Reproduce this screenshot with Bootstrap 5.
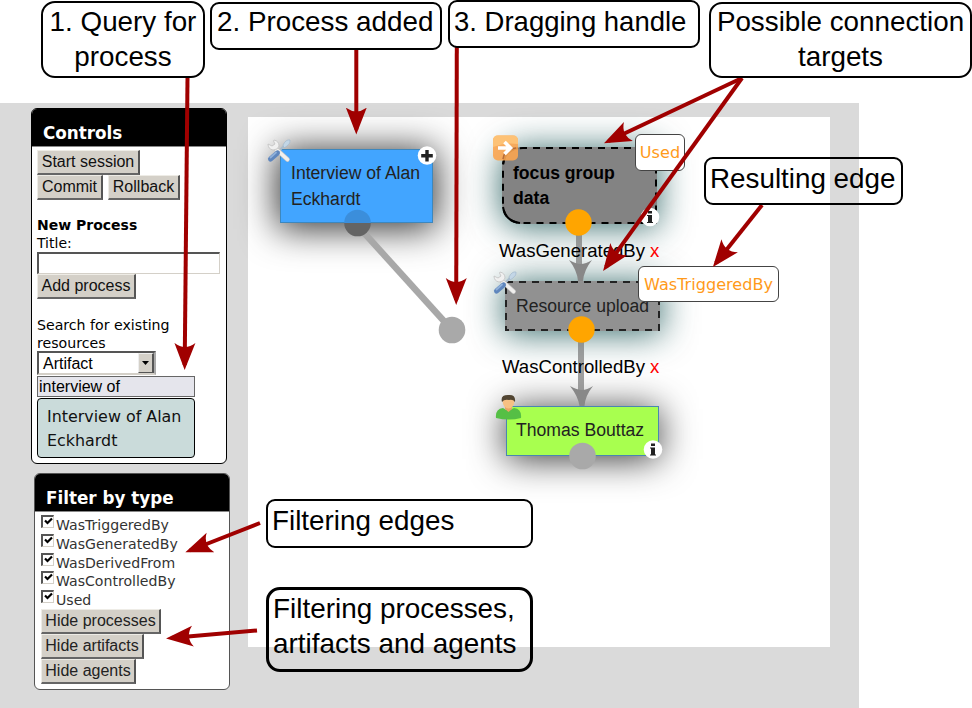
<!DOCTYPE html>
<html lang="en">
<head>
<meta charset="utf-8">
<title>Provenance editor guide</title>
<link href="https://cdn.jsdelivr.net/npm/bootstrap@5.3.0/dist/css/bootstrap.min.css" rel="stylesheet">
<style>
body{background:#fff;color:#000;font-family:"DejaVu Sans",sans-serif;font-size:14px;line-height:18px}
.guide{width:972px;height:708px;padding-top:103px}
.workspace{width:859px;height:605px;background:#dadada}
.side{width:248px;padding:5px 0 0 31px}
.panel{width:196px;border:1px solid #000;border-radius:6px;background:#fff}
.panel-controls{height:356px;margin-bottom:9px}
.panel-filter{height:217px;margin-left:3px;border-color:#555;color:#333}
.panel h2{background:#000;color:#fff;font-size:16.8px;font-weight:bold;line-height:20px;height:38px;padding:14px 0 0 11px;border-bottom:1px solid #888}
.panel-filter h2{height:38px}
.pbody{padding:3px 5px 0}
.panel-filter .pbody{padding-left:6px}
.cbtn{display:block;height:25px;padding:0;background:#d4d0c8;border:solid;border-width:1px 2px 2px 1px;border-color:#eeece6 #555 #666 #eeece6;font:16px/20px "Liberation Sans",sans-serif;color:#111;text-align:center;white-space:nowrap;border-radius:0}
.panel-filter .cbtn{color:#222;line-height:19px;padding-bottom:2px}
.b1{width:103px}.b2{width:66px}.b3{width:72px}.b4{width:99px}.b5{width:120px}.b6{width:103px}.b7{width:95px}
.title-in{display:block;width:183px;height:22px;border:solid;border-width:2px 1px 1px 2px;border-color:#555 #d4d0c8 #d4d0c8 #555;background:#fff}
.kind{width:119px;height:24px;border:2px solid;border-color:#555 #aaa #d4d0c8 #555;font:16px/21px "Liberation Sans",sans-serif;padding-left:4px}
.drop{width:16px;height:20px;background:#d4d0c8;border:1px solid;border-color:#eee #555 #555 #eee;border-right-width:2px}
.query{width:158px;height:21px;margin-top:1px;border:1px solid #666;background:#e5e5ec;font:16px/19px "Liberation Sans",sans-serif;padding-left:1px}
.hit{width:158px;height:60px;margin-top:1px;border:1px solid #000;border-radius:4px;background:#cadbda;font-size:15.9px;line-height:24px;padding:6px 9px;color:#111}
.find{font-size:14.15px;padding-top:17px;margin-bottom:-1px}
.checks{height:94px}
.check{height:18.8px;line-height:18.8px;font-size:14.1px}
.tick{width:13px;height:13px;border:solid;border-width:2px 1px 1px 2px;border-color:#555 #d4d0c8 #d4d0c8 #555;margin-right:2px}
.tick svg{display:block;margin:0 auto}
.check span{padding-top:1px}
.canvas{width:582px;height:530px;margin-top:14px;background:#fff}
.abs,.node,.pop,.note,.elabel{position:absolute}
.layer{left:0;top:0;overflow:visible}
.node{font:17.6px/26px "Liberation Sans",sans-serif;color:#222;padding:10px;white-space:nowrap}
.n-proc{left:32px;top:32px;width:153px;height:74px;background:#42a5ff;border:1px solid #3d87bd;box-shadow:0 3px 36px 3px rgba(0,0,0,.8)}
.n-art{left:254px;top:30px;width:155px;height:77px;background:#838383;border-radius:20px 0 0 20px;font-weight:bold;color:#000;padding:14px 11px;line-height:25px;box-shadow:0 2px 34px 1px rgba(10,75,75,.8)}
.n-res{left:257px;top:164px;width:155px;height:50px;background:#919191;padding:12px 11px;box-shadow:0 2px 34px 1px rgba(10,75,75,.8)}
.n-agent{left:258px;top:289px;width:153px;height:50px;background:#a8ff4f;border:1px solid #4a86b0;box-shadow:0 3px 36px rgba(0,0,0,.8);padding-left:9px}
.elabel{font:18.6px/22px "Liberation Sans",sans-serif;white-space:nowrap}
.elabel b{color:#f00;font-weight:normal;margin-left:5px}
.l-gen{left:251px;top:123px}.l-con{left:254px;top:239px}
.pop{background:#fff;border:1.5px solid #444;border-radius:6px;color:#ff9a1a;font-size:16.1px;line-height:36px;text-align:center}
.p-used{left:387px;top:17px;width:50px;height:37px}
.p-trig{left:390px;top:149px;width:141px;height:36px}
.note{border:2px solid #000;border-radius:9px;font:27.8px/35px "Liberation Sans",sans-serif;white-space:nowrap;padding-left:4px}
.a1{left:41px;top:1px;width:164px;height:77px;border-radius:14px;text-align:center;padding:1px 0 0}
.a2{left:210px;top:2px;width:232px;height:48px;padding-left:5px}
.a3{left:448px;top:0;width:252px;height:48px;font-size:27.5px;padding:2px 0 0 4px}
.a4{left:709px;top:2px;width:263px;height:76px;border-radius:13px;text-align:center;padding:0}
.a5{left:704px;top:157px;width:199px;height:48px;padding-top:2px}
.a6{left:266px;top:499px;width:267px;height:49px;padding-top:2px}
.a7{left:266px;top:587px;width:267px;height:85px;border-width:3px;border-radius:14px;padding:1px 0 0 4px;font-size:27.9px}
</style>
</head>
<body>
<main class="guide position-relative overflow-hidden">
<div class="workspace d-flex">
  <aside class="side flex-shrink-0">
    <section class="panel panel-controls overflow-hidden">
      <h2 class="m-0">Controls</h2>
      <div class="pbody">
        <button class="cbtn b1">Start session</button>
        <div class="d-flex" style="gap:5px"><button class="cbtn b2">Commit</button><button class="cbtn b3">Rollback</button></div>
        <div class="fw-bold pt-3">New Process</div>
        <div>Title:</div>
        <input class="title-in" aria-label="Title">
        <button class="cbtn b4">Add process</button>
        <div class="find">Search for existing<br>resources</div>
        <div class="kind d-flex justify-content-between"><span>Artifact</span><span class="drop d-flex align-items-center justify-content-center"><svg width="7" height="4"><path d="M0 0H7L3.5 4Z"/></svg></span></div>
        <div class="query">interview of</div>
        <div class="hit">Interview of Alan<br>Eckhardt</div>
      </div>
    </section>
    <section class="panel panel-filter overflow-hidden">
      <h2 class="m-0">Filter by type</h2>
      <div class="pbody">
        <div class="checks">
          <div class="check d-flex"><i class="tick"><svg width="9" height="9"><path d="M1 3.5L3.5 6L8 1.5" fill="none" stroke="#000" stroke-width="2.2"/></svg></i><span>WasTriggeredBy</span></div>
          <div class="check d-flex"><i class="tick"><svg width="9" height="9"><path d="M1 3.5L3.5 6L8 1.5" fill="none" stroke="#000" stroke-width="2.2"/></svg></i><span>WasGeneratedBy</span></div>
          <div class="check d-flex"><i class="tick"><svg width="9" height="9"><path d="M1 3.5L3.5 6L8 1.5" fill="none" stroke="#000" stroke-width="2.2"/></svg></i><span>WasDerivedFrom</span></div>
          <div class="check d-flex"><i class="tick"><svg width="9" height="9"><path d="M1 3.5L3.5 6L8 1.5" fill="none" stroke="#000" stroke-width="2.2"/></svg></i><span>WasControlledBy</span></div>
          <div class="check d-flex"><i class="tick"><svg width="9" height="9"><path d="M1 3.5L3.5 6L8 1.5" fill="none" stroke="#000" stroke-width="2.2"/></svg></i><span>Used</span></div>
        </div>
        <button class="cbtn b5">Hide processes</button>
        <button class="cbtn b6">Hide artifacts</button>
        <button class="cbtn b7">Hide agents</button>
      </div>
    </section>
  </aside>
  <section class="canvas position-relative">
    <div class="node n-proc">Interview of Alan<br>Eckhardt</div>
    <div class="node n-art">focus group<br>data</div>
    <div class="node n-res">Resource upload</div>
    <div class="node n-agent">Thomas Bouttaz</div>
    <!-- connectors, handles and badges, in page units -->
    <svg class="abs layer" width="582" height="530" viewBox="248 117 582 530">
      <defs>
        <g id="tools">
          <path d="M18 6 12 12" stroke="#a9bccd" stroke-width="2"/>
          <path d="M16 6Q19 0 23 1Q24 4 20 7L17 9Z" fill="#c3d6e6" stroke="#9db3c8" stroke-width=".6"/>
          <path d="M9 10L20.500 20.500" stroke="#c4c4c4" stroke-width="4.600" stroke-linecap="round"/>
          <path d="M9 10L20.500 20.500" stroke="#f0efed" stroke-width="3.400" stroke-linecap="round"/>
          <path d="M7 1Q12 2 12 7Q11 11 6 11Q1 10 1 5L5 7L8 5L6.500 2Z" fill="#f0f0f0" stroke="#c2c2c2" stroke-width=".8"/>
          <path d="M10.500 14 3.500 20" stroke="#5f86bd" stroke-width="5" stroke-linecap="round"/>
          <path d="M9 13.500 3.500 18.500" stroke="#8fb0da" stroke-width="1.800" stroke-linecap="round"/>
        </g>
        <g id="info"><circle r="9.300" fill="#fff"/><path d="M-3-2H2V5H3V6H-3V5H-2V-1H-3ZM-2-6H2V-3.500H-2Z" fill="#222"/></g>
      </defs>
      <path d="M357 225L452 330" stroke="#a8a8a8" stroke-width="6.500"/>
      <circle cx="452" cy="330" r="13.300" fill="#a9a9a9"/>
      <path d="M344.200 223A13.200 13.200 0 1 1 370.800 223Z" fill="#3b8edb"/>
      <path d="M344.200 223A13.200 13.200 0 0 0 370.800 223Z" fill="#646464"/>
      <circle cx="427" cy="155.500" r="9.300" fill="#fff"/><path d="M427 150V161.500M421.200 155.700H432.800" stroke="#222" stroke-width="3.400"/>
      <use href="#tools" x="267" y="139"/>
      <path d="M657 148H523Q503 148 503 168V203Q503 223 523 223H656V148" fill="none" stroke="#000" stroke-width="2" stroke-dasharray="7 6"/>
      <path d="M503 164Q505 150 518 148M503 207Q505 221 520 223" fill="none" stroke="#000" stroke-width="2"/>
      <path d="M506 282H659V330H506Z" fill="none" stroke="#222" stroke-width="2" stroke-dasharray="7 6"/>
      <path d="M579 225V268M581 335V393" stroke="#777" stroke-opacity=".7" stroke-width="6"/>
      <path d="M569 260Q576 264 580.500 264Q586 264 592 260Q584 270 583 281H578Q577 270 569 260ZM570 386Q577 390 582 390Q587 390 593 386Q585 396 584.500 406H579.500Q578 396 570 386Z" fill="#888"/>
      <circle cx="578.500" cy="222.500" r="13.200" fill="#ffa500"/>
      <circle cx="581.500" cy="329.500" r="13.200" fill="#ffa500"/>
      <circle cx="582.500" cy="456" r="13.300" fill="#a9a9a9"/>
      <use href="#info" x="650" y="217"/>
      <use href="#info" x="653" y="449.500"/>
      <rect x="493" y="135.500" width="25" height="25" rx="5" fill="#fba550" fill-opacity=".9"/>
      <path d="M493 147V140.500Q493 135.500 498 135.500H513Q518 135.500 518 140.500V144Q505 142 493 147Z" fill="#fdc276"/>
      <path d="M503 159Q504 149 516 148" fill="none" stroke="#b56b38" stroke-width="1.500"/>
      <path d="M498 148H509M504.500 142L510.500 148L504.500 154" fill="none" stroke="#fff" stroke-width="3.600"/>
      <use href="#tools" x="493" y="271"/>
      <path d="M496 418Q495 409 503 408L508 411L514 408Q522 409 521 418Q509 421 496 418Z" fill="#55bf45"/>
      <path d="M505 405H512V409L508.500 412L505 409Z" fill="#e9a565"/>
      <ellipse cx="508.500" cy="402" rx="5.800" ry="6.500" fill="#f7c083"/>
      <path d="M502 402Q500 395 508 395Q516 394 515 402Q513 399 509 400Q504 399 502 402Z" fill="#514532"/>
    </svg>
    <div class="elabel l-gen">WasGeneratedBy<b>x</b></div>
    <div class="elabel l-con">WasControlledBy<b>x</b></div>
    <div class="pop p-used">Used</div>
    <div class="pop p-trig">WasTriggeredBy</div>
  </section>
</div>
<!-- callout arrows -->
<svg class="abs layer" width="972" height="708">
  <defs><marker id="tip" markerUnits="userSpaceOnUse" markerWidth="30" markerHeight="24" refX="22" refY="11" orient="auto"><path d="M0 .5L27 11L0 21.500Q8 11 0 .5Z" fill="#a00000"/></marker></defs>
  <g fill="none" stroke="#a00000" stroke-width="4">
    <path d="M187.500 78L184.700 365" marker-end="url(#tip)"/>
    <path d="M356.300 50V129.500" marker-end="url(#tip)"/>
    <path d="M456.800 47L456.200 300" marker-end="url(#tip)"/>
    <path d="M742 78L608.500 141" marker-end="url(#tip)"/>
    <path d="M742 78L606 267" marker-end="url(#tip)"/>
    <path d="M762 205L716 263" marker-end="url(#tip)"/>
    <path d="M260 523L190 550.500" marker-end="url(#tip)"/>
    <path d="M257 630.500L171 638" marker-end="url(#tip)"/>
  </g>
</svg>
<div class="note a1">1. Query for<br>process</div>
<div class="note a2">2. Process added</div>
<div class="note a3">3. Dragging handle</div>
<div class="note a4">Possible connection<br>targets</div>
<div class="note a5">Resulting edge</div>
<div class="note a6">Filtering edges</div>
<div class="note a7">Filtering processes,<br>artifacts and agents</div>
</main>
<script src="https://cdn.jsdelivr.net/npm/bootstrap@5.3.0/dist/js/bootstrap.bundle.min.js"></script>
</body>
</html>
